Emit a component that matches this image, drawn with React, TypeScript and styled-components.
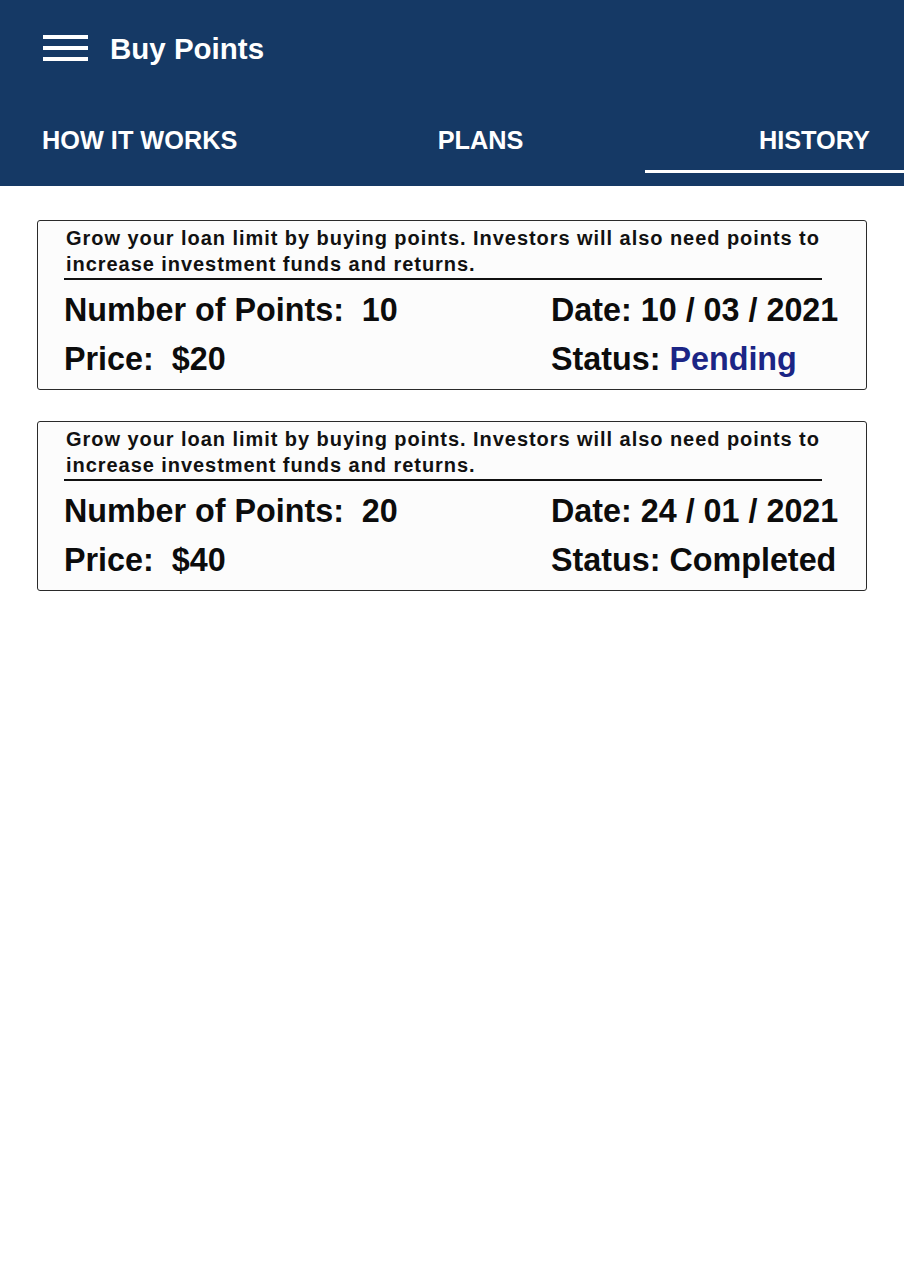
import React from "react";
import styled, { createGlobalStyle } from "styled-components";

const Global = createGlobalStyle`
  html, body { margin: 0; padding: 0; background: #ffffff; }
  body { font-family: "Liberation Sans", Arial, sans-serif; }
  * { box-sizing: border-box; }
`;

const Page = styled.div`
  width: 904px;
  min-height: 1280px;
  background: #ffffff;
`;

const Header = styled.header`
  background: #153965;
  height: 186px;
  display: flex;
  flex-direction: column;
`;

const TopBar = styled.div`
  display: flex;
  align-items: center;
  gap: 22px;
  padding: 0 0 0 43px;
  height: 98px;
`;

const Burger = styled.div`
  width: 45px;
  display: flex;
  flex-direction: column;
  gap: 7px;
  margin-top: -2px;
`;

const BurgerLine = styled.span`
  display: block;
  height: 4px;
  background: #ffffff;
`;

const Title = styled.h1`
  margin: 0;
  color: #ffffff;
  font-size: 29.5px;
  font-weight: 700;
`;

const Tabs = styled.nav`
  display: grid;
  grid-template-columns: 316px 329px 259px;
  height: 88px;
`;

const Tab = styled.div<{ $align: "left" | "center" | "right"; $active?: boolean }>`
  display: flex;
  align-items: center;
  justify-content: ${(p) =>
    p.$align === "left" ? "flex-start" : p.$align === "right" ? "flex-end" : "center"};
  padding: 0 ${(p) => (p.$align === "right" ? "34px" : "0")} 4px
    ${(p) => (p.$align === "left" ? "42px" : "0")};
  color: #ffffff;
  font-size: 25.3px;
  font-weight: 700;
  position: relative;
  &::after {
    content: "";
    display: ${(p) => (p.$active ? "block" : "none")};
    position: absolute;
    left: 0;
    right: 0;
    bottom: 13px;
    height: 3px;
    background: #ffffff;
  }
`;

const List = styled.main`
  display: flex;
  flex-direction: column;
  gap: 31px;
  padding: 34px 37px 0 37px;
`;

const Card = styled.section`
  border: 1.5px solid #2a2a2a;
  border-radius: 3px;
  background: #fcfcfc;
  height: 170px;
  padding: 4px 44px 0 26px;
  display: flex;
  flex-direction: column;
`;

const Description = styled.p`
  margin: 0;
  font-size: 20px;
  line-height: 26px;
  font-weight: 700;
  letter-spacing: 0.95px;
  color: #111111;
  padding: 0 0 1px 2px;
  border-bottom: 2px solid #111111;
`;

const Details = styled.div`
  display: grid;
  grid-template-columns: 487px 1fr;
  row-gap: 12px;
  padding-top: 12px;
`;

const Field = styled.div`
  font-size: 32.3px;
  line-height: 37px;
  font-weight: 700;
  color: #0c0c0c;
  white-space: pre;
`;

const Value = styled.span<{ $tone?: "pending" }>`
  color: ${(p) => (p.$tone === "pending" ? "#1b2585" : "inherit")};
`;

type Item = {
  points: number;
  price: string;
  date: string;
  status: string;
  pending?: boolean;
};

const items: Item[] = [
  { points: 10, price: "$20", date: "10 / 03 / 2021", status: "Pending", pending: true },
  { points: 20, price: "$40", date: "24 / 01 / 2021", status: "Completed" },
];

export default function App() {
  return (
    <Page>
      <Global />
      <Header>
        <TopBar>
          <Burger>
            <BurgerLine />
            <BurgerLine />
            <BurgerLine />
          </Burger>
          <Title>Buy Points</Title>
        </TopBar>
        <Tabs>
          <Tab $align="left">HOW IT WORKS</Tab>
          <Tab $align="center">PLANS</Tab>
          <Tab $align="right" $active>
            HISTORY
          </Tab>
        </Tabs>
      </Header>
      <List>
        {items.map((it) => (
          <Card key={it.date}>
            <Description>
              Grow your loan limit by buying points. Investors will also need points to
              increase investment funds and returns.
            </Description>
            <Details>
              <Field>Number of Points:  {it.points}</Field>
              <Field>Date: {it.date}</Field>
              <Field>Price:  {it.price}</Field>
              <Field>
                Status: <Value $tone={it.pending ? "pending" : undefined}>{it.status}</Value>
              </Field>
            </Details>
          </Card>
        ))}
      </List>
    </Page>
  );
}
